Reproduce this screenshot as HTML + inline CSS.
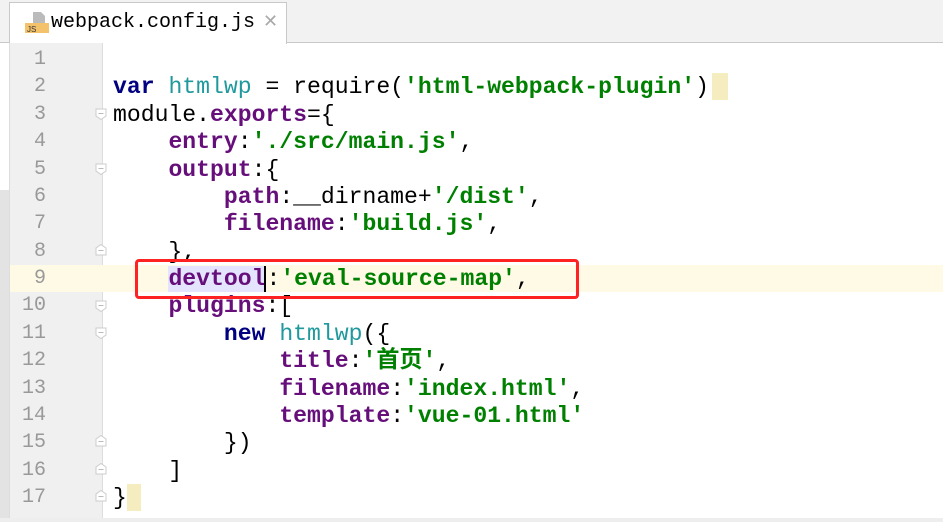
<!DOCTYPE html>
<html><head><meta charset="utf-8"><style>
body{margin:0;width:943px;height:522px;overflow:hidden;background:#fff;position:relative;font-family:"Liberation Mono","Noto Sans CJK SC",monospace}
.tabbar{position:absolute;left:0;top:0;width:943px;height:42px;background:#f2f2f2;border-bottom:1px solid #c9c9c9}
.tab{position:absolute;left:9px;top:2px;width:276px;height:41px;background:#fff;border:1px solid #c9c9c9;border-bottom:none}
.tabt{position:absolute;left:41px;top:8px;font-size:20px;color:#000}
.x{position:absolute;left:253px;top:8px;font-size:18px;color:#aaa;font-family:"DejaVu Sans",sans-serif}
.left{position:absolute;left:0;top:43px;width:9px;height:479px;background:#fff;border-right:1px solid #ddd}
.left2{position:absolute;left:0;top:190px;width:9px;height:332px;background:#e3e3e3}
.gut{position:absolute;left:10px;top:43px;width:92px;height:475px;background:#f0f0f0;border-right:1px solid #ddd}
.hl{position:absolute;left:10px;top:265px;width:933px;height:27px;background:#fefae6}
.ln{position:absolute;left:10px;width:36px;text-align:right;font-size:20px;color:#999;height:27.375px;line-height:27.375px}
.code{position:absolute;left:113px;top:47px;font-size:23.1px;line-height:27.375px;white-space:pre;color:#000}
.k{color:#000080;font-weight:bold}.s{color:#008000;font-weight:bold}.p{color:#660e7a;font-weight:bold}.v{color:#20999d}
.box{position:absolute;left:135px;top:259px;width:438px;height:34px;border:3px solid #f22;border-radius:4px}
.fold{position:absolute;left:95px;width:12px;height:12px}
.bm{position:absolute;background:#f5ecbf}
.bottom{position:absolute;left:0;top:518px;width:943px;height:4px;background:#eee}
</style></head><body>
<div class="tabbar"><div class="tab">
<svg style="position:absolute;left:15px;top:8px" width="24" height="22"><path d="M8 1h8l4 4v8H8z" fill="#bbb"/><rect x="0" y="12" width="24" height="10" fill="#f4c26b"/><text x="2" y="21" font-size="8" font-family="Liberation Sans" fill="#333">JS</text></svg>
<span class="tabt">webpack.config.js</span><span class="x">✕</span></div></div>
<div class="left"></div><div class="left2"></div>
<div class="gut"></div>
<div class="hl"></div>
<div class="bm" style="left:712px;top:73px;width:16px;height:27px"></div>
<div class="bm" style="left:127px;top:484px;width:14px;height:27px"></div>
<div class="ln" style="top:46px">1</div><div class="ln" style="top:73.4px">2</div><div class="ln" style="top:100.8px">3</div><div class="ln" style="top:128.1px">4</div><div class="ln" style="top:155.5px">5</div><div class="ln" style="top:182.9px">6</div><div class="ln" style="top:210.3px">7</div><div class="ln" style="top:237.6px">8</div><div class="ln" style="top:265px">9</div><div class="ln" style="top:292.4px">10</div><div class="ln" style="top:319.8px">11</div><div class="ln" style="top:347.1px">12</div><div class="ln" style="top:374.5px">13</div><div class="ln" style="top:401.9px">14</div><div class="ln" style="top:429.3px">15</div><div class="ln" style="top:456.6px">16</div><div class="ln" style="top:484px">17</div>
<svg class="fold" style="top:108px" viewBox="0 0 12 12"><path d="M1 1h10v7l-5 3.5L1 8z" fill="#fff" stroke="#ccc"/><path d="M3.5 5.5h5" stroke="#bbb"/></svg>
<svg class="fold" style="top:163px" viewBox="0 0 12 12"><path d="M1 1h10v7l-5 3.5L1 8z" fill="#fff" stroke="#ccc"/><path d="M3.5 5.5h5" stroke="#bbb"/></svg>
<svg class="fold" style="top:300px" viewBox="0 0 12 12"><path d="M1 1h10v7l-5 3.5L1 8z" fill="#fff" stroke="#ccc"/><path d="M3.5 5.5h5" stroke="#bbb"/></svg>
<svg class="fold" style="top:327px" viewBox="0 0 12 12"><path d="M1 1h10v7l-5 3.5L1 8z" fill="#fff" stroke="#ccc"/><path d="M3.5 5.5h5" stroke="#bbb"/></svg>
<svg class="fold" style="top:244px" viewBox="0 0 12 12"><path d="M1 11h10V4L6 .5 1 4z" fill="#fff" stroke="#ccc"/><path d="M3.5 6.5h5" stroke="#bbb"/></svg>
<svg class="fold" style="top:435px" viewBox="0 0 12 12"><path d="M1 11h10V4L6 .5 1 4z" fill="#fff" stroke="#ccc"/><path d="M3.5 6.5h5" stroke="#bbb"/></svg>
<svg class="fold" style="top:463px" viewBox="0 0 12 12"><path d="M1 11h10V4L6 .5 1 4z" fill="#fff" stroke="#ccc"/><path d="M3.5 6.5h5" stroke="#bbb"/></svg>
<svg class="fold" style="top:490px" viewBox="0 0 12 12"><path d="M1 11h10V4L6 .5 1 4z" fill="#fff" stroke="#ccc"/><path d="M3.5 6.5h5" stroke="#bbb"/></svg>
<div class="code">
<span class="k">var</span> <span class="v">htmlwp</span> = require(<span class="s">'html-webpack-plugin'</span>)
module.<span class="p">exports</span>={
    <span class="p">entry</span>:<span class="s">'./src/main.js'</span>,
    <span class="p">output</span>:{
        <span class="p">path</span>:__dirname+<span class="s">'/dist'</span>,
        <span class="p">filename</span>:<span class="s">'build.js'</span>,
    },
    <span class="p" style="background:#e4e4ff">devtool</span><span style="border-left:2px solid #000;margin-left:-1px">:</span><span class="s">'eval-source-map'</span>,
    <span class="p">plugins</span>:[
        <span class="k">new</span> <span class="v">htmlwp</span>({
            <span class="p">title</span>:<span class="s">'首页'</span>,
            <span class="p">filename</span>:<span class="s">'index.html'</span>,
            <span class="p">template</span>:<span class="s">'vue-01.html'</span>
        })
    ]
}</div>
<div class="box"></div>
<div class="bottom"></div>
</body></html>
